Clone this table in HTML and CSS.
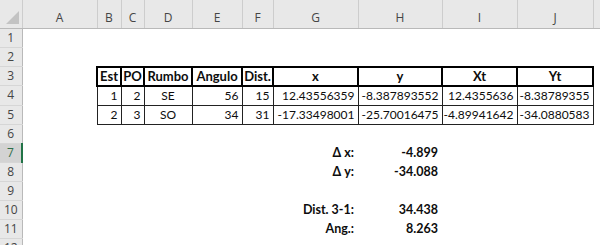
FILE: index.html
```html
<!DOCTYPE html>
<html lang="es">
<head>
<meta charset="utf-8">
<title>Hoja</title>
<link rel="stylesheet" href="styles.css">
</head>
<body>
<table class="sheet">
  <colgroup>
    <col class="c-rh"><col class="c-a"><col class="c-b"><col class="c-c"><col class="c-d"><col class="c-e"><col class="c-f"><col class="c-g"><col class="c-h"><col class="c-i"><col class="c-j"><col class="c-k">
  </colgroup>
  <tr class="colhead">
    <th class="corner"><svg width="22" height="28" viewBox="0 0 22 28"><polygon points="19,11 19,24 6,24" fill="#c3c3c3"/></svg></th>
    <th>A</th><th>B</th><th>C</th><th>D</th><th>E</th><th>F</th><th>G</th><th>H</th><th>I</th><th>J</th><th></th>
  </tr>
  <tr><td class="rh">1</td><td></td><td></td><td></td><td></td><td></td><td></td><td></td><td></td><td></td><td></td><td></td></tr>
  <tr><td class="rh">2</td><td></td><td></td><td></td><td></td><td></td><td></td><td></td><td></td><td></td><td></td><td></td></tr>
  <tr><td class="rh">3</td><td></td>
    <td class="th">Est</td><td class="th">PO</td><td class="th">Rumbo</td><td class="th">Angulo</td><td class="th">Dist.</td><td class="th">x</td><td class="th">y</td><td class="th">Xt</td><td class="th">Yt</td><td></td></tr>
  <tr><td class="rh">4</td><td></td>
    <td class="td num">1</td><td class="td num">2</td><td class="td ctr">SE</td><td class="td num">56</td><td class="td num">15</td><td class="td num">12.43556359</td><td class="td num">-8.387893552</td><td class="td num">12.4355636</td><td class="td num">-8.38789355</td><td></td></tr>
  <tr><td class="rh">5</td><td></td>
    <td class="td num">2</td><td class="td num">3</td><td class="td ctr">SO</td><td class="td num">34</td><td class="td num">31</td><td class="td num">-17.33498001</td><td class="td num">-25.70016475</td><td class="td num">-4.89941642</td><td class="td num">-34.0880583</td><td></td></tr>
  <tr><td class="rh">6</td><td></td><td></td><td></td><td></td><td></td><td></td><td></td><td></td><td></td><td></td><td></td></tr>
  <tr><td class="rh sel">7</td><td></td><td></td><td></td><td></td><td></td><td></td><td class="lbl">&Delta; x:</td><td class="val">-4.899</td><td></td><td></td><td></td></tr>
  <tr><td class="rh">8</td><td></td><td></td><td></td><td></td><td></td><td></td><td class="lbl">&Delta; y:</td><td class="val">-34.088</td><td></td><td></td><td></td></tr>
  <tr><td class="rh">9</td><td></td><td></td><td></td><td></td><td></td><td></td><td></td><td></td><td></td><td></td><td></td></tr>
  <tr><td class="rh">10</td><td></td><td></td><td></td><td></td><td></td><td></td><td class="lbl">Dist. 3-1:</td><td class="val">34.438</td><td></td><td></td><td></td></tr>
  <tr><td class="rh">11</td><td></td><td></td><td></td><td></td><td></td><td></td><td class="lbl">Ang.:</td><td class="val">8.263</td><td></td><td></td><td></td></tr>
  <tr><td class="rh">12</td><td></td><td></td><td></td><td></td><td></td><td></td><td></td><td></td><td></td><td></td><td></td></tr>
</table>
</body>
</html>
```
FILE: styles.css
```css
html, body {
  margin: 0;
  padding: 0;
  background: #ffffff;
  overflow: hidden;
}

.sheet {
  border-collapse: collapse;
  table-layout: fixed;
  width: 600px;
  font-family: Lato, "Liberation Sans", sans-serif;
  font-size: 12px;
  color: #0d0d0d;
}

.c-rh { width: 22px; }
.c-a { width: 75px; }
.c-b { width: 24px; }
.c-c { width: 23px; }
.c-d { width: 48px; }
.c-e { width: 50px; }
.c-f { width: 31px; }
.c-g { width: 85px; }
.c-h { width: 84px; }
.c-i { width: 75px; }
.c-j { width: 76px; }
.c-k { width: 7px; }

.sheet td {
  padding: 0;
  height: 18px;
  line-height: 16px;
  white-space: nowrap;
  overflow: hidden;
}

.colhead th {
  height: 20px;
  padding: 7px 0 0;
  background: #e8e8e8;
  color: #454545;
  font-family: "Open Sans", "Noto Sans", sans-serif;
  font-weight: normal;
  font-size: 12px;
  line-height: 16px;
  border-right: 1px solid #cdcdcd;
  border-bottom: 1px solid #b9b9b9;
  vertical-align: middle;
}

.colhead th.corner {
  padding: 0;
  height: 27px;
  line-height: 0;
  vertical-align: top;
}

.corner svg { display: block; }

.sheet td.rh {
  background: #e8e8e8;
  color: #454545;
  text-align: center;
  font-family: "Open Sans", "Noto Sans", sans-serif;
  font-size: 12px;
  border-right: 1px solid #b9b9b9;
  border-bottom: 1px solid #d6d6d6;
}

.sheet td.sel {
  background: #d3d3d3;
  color: #2f6f4a;
  border-right: 2px solid #217346;
}

.sheet td.th {
  height: 17px;
  border: 2px solid #000;
  font-weight: bold;
  font-size: 13px;
  text-align: center;
}

.sheet td.td {
  border: 1px solid #222;
}

.sheet td.num {
  text-align: right;
  padding-right: 3px;
}

.ctr { text-align: center; }

.sheet td.lbl {
  font-weight: bold;
  font-size: 12.5px;
  text-align: right;
  padding-right: 4px;
}

.sheet td.val {
  font-weight: bold;
  font-size: 12.5px;
  text-align: right;
  padding-right: 4px;
}
```
